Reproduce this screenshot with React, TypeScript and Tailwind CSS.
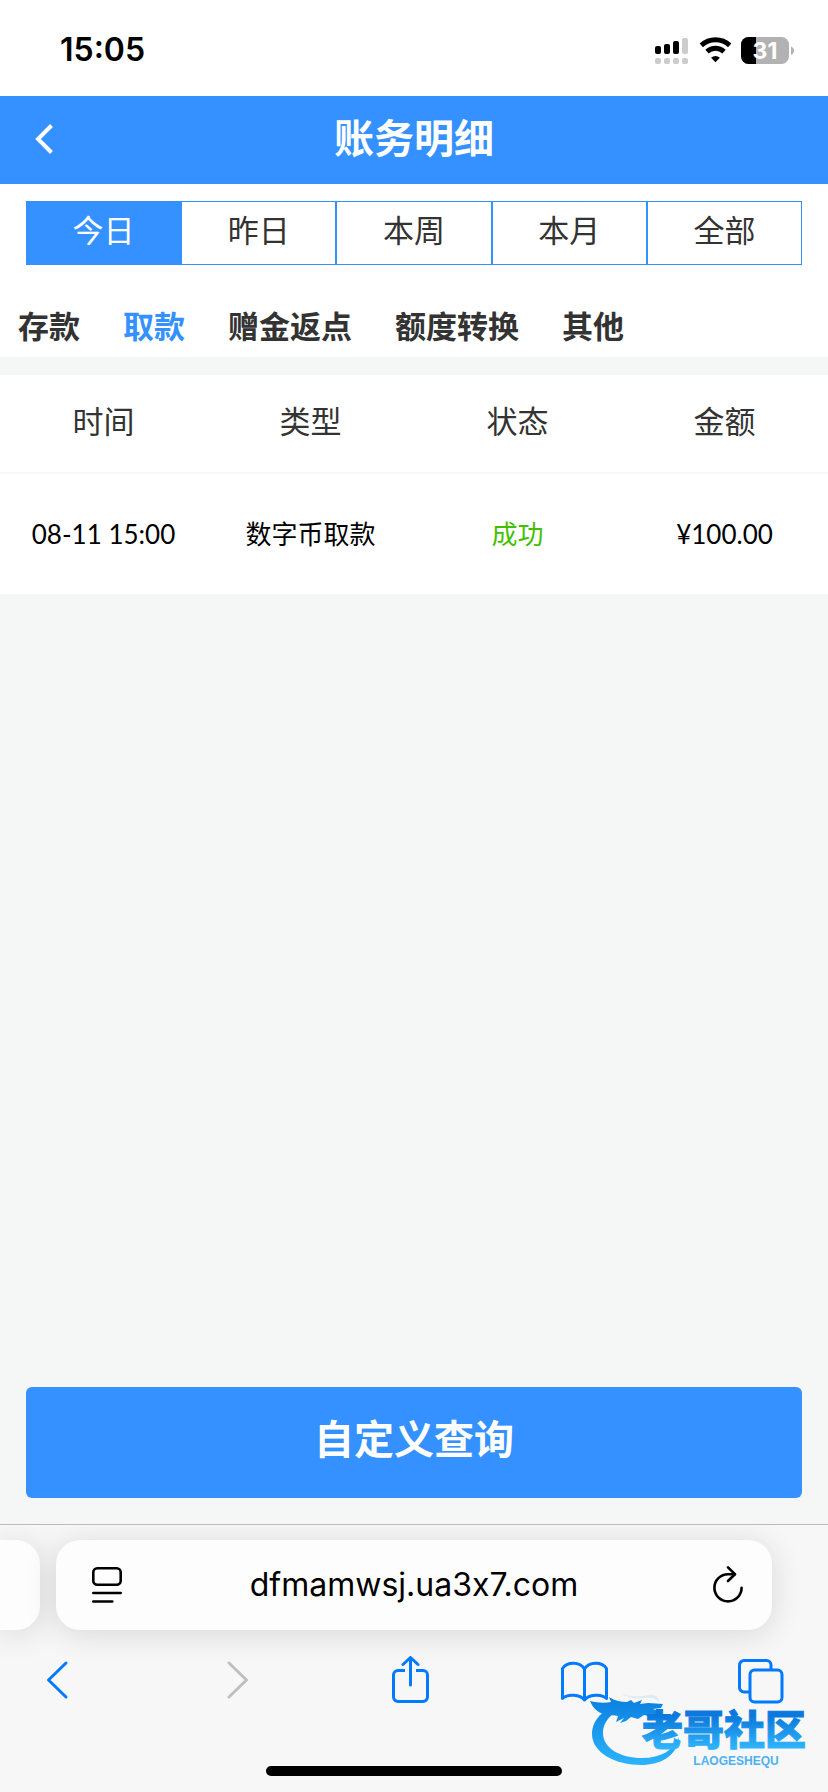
import React, { useState } from 'react'
import clsx from 'clsx'

const ranges = ['今日', '昨日', '本周', '本月', '全部']
const categories = ['存款', '取款', '赠金返点', '额度转换', '其他']
const columns = ['时间', '类型', '状态', '金额']
const records = [
    { time: '08-11 15:00', type: '数字币取款', status: '成功', amount: '¥100.00' },
]

function StatusBar() {
    return (
        <div className="flex h-24 items-center justify-between bg-white pr-8 pl-[60px] text-black">
            <span className="pt-1 font-['Inter'] text-[32px] leading-10 font-semibold">15:05</span>
            <svg width="142" height="32" viewBox="0 0 142 32" className="mt-1" aria-hidden="true">
                {/* Signal */}
                <g>
                    <rect x="1" y="12" width="6" height="8" rx="2" />
                    <rect x="10" y="10" width="6" height="10" rx="2" />
                    <rect x="19" y="7" width="6" height="13" rx="2" />
                </g>
                <g fill="#cccccc">
                    <rect x="28" y="4" width="6" height="16" rx="2" />
                    <rect x="1" y="24" width="6" height="6" rx="2" />
                    <rect x="10" y="24" width="6" height="6" rx="2" />
                    <rect x="19" y="24" width="6" height="6" rx="2" />
                    <rect x="28" y="24" width="6" height="6" rx="2" />
                </g>
                {/* Wifi */}
                <g fill="none" stroke="#000" strokeWidth="5">
                    <path d="M47.3 11.3a21.2 21.2 0 0 1 28.4 0" />
                    <path d="M53 17.6a12.8 12.8 0 0 1 17 0" />
                </g>
                <path d="M61.5 28.2l-4.4-4.5a6.4 6.4 0 0 1 8.8 0z" />
                {/* Battery */}
                <clipPath id="battery">
                    <rect x="87" y="3" width="48" height="27" rx="7.5" />
                </clipPath>
                <g clipPath="url(#battery)">
                    <rect x="87" y="3" width="48" height="27" fill="#b2b2b2" />
                    <rect x="87" y="3" width="15" height="27" />
                </g>
                <path d="M137 12.5c4 1.5 4 7 0 8.5z" fill="#b2b2b2" />
                <text x="111" y="25" textAnchor="middle" fill="#fff" className="font-['Inter'] text-[23px] font-bold">31</text>
            </svg>
        </div>
    )
}

function Header() {
    return (
        <header className="grid h-[88px] grid-cols-[88px_1fr_88px] items-center bg-[#3491ff] text-white">
            <button aria-label="返回" className="flex h-full items-center pl-8">
                <svg width="24" height="32" viewBox="0 0 24 32" fill="none" stroke="currentColor" strokeWidth="4" className="-mt-1">
                    <path d="M19.5 3.5L6 17l13.5 13.5" />
                </svg>
            </button>
            <h1 className="pb-2 text-center text-[40px] leading-[56px] font-bold">账务明细</h1>
        </header>
    )
}

function RangeTabs() {
    const [active, setActive] = useState('今日')
    return (
        <div className="grid grid-cols-5 px-[26px] pt-[17px]">
            {ranges.map((range) => (
                <button
                    key={range}
                    onClick={() => setActive(range)}
                    className={clsx(
                        'h-16 border border-[#3491ff] pb-2 text-[31px] leading-10',
                        active === range ? 'bg-[#3491ff] text-white' : 'text-[#333333]',
                    )}>
                    {range}
                </button>
            ))}
        </div>
    )
}

function CategoryTabs() {
    const [active, setActive] = useState('取款')
    return (
        <nav className="flex gap-[43px] pt-[37px] pr-4 pb-[10px] pl-[18px]">
            {categories.map((category) => (
                <button
                    key={category}
                    onClick={() => setActive(category)}
                    className={clsx(
                        'text-[31px] leading-[45px] font-bold whitespace-nowrap',
                        active === category ? 'text-[#3491ff]' : 'text-[#333333]',
                    )}>
                    {category}
                </button>
            ))}
        </nav>
    )
}

function RecordTable() {
    return (
        <table className="w-full table-fixed bg-white text-center">
            <thead>
                <tr className="h-[98px] border-b-2 border-[#f7f8f8] text-[31px] leading-10 text-[#333333]">
                    {columns.map((column) => (
                        <th key={column} className="pb-2 font-normal">{column}</th>
                    ))}
                </tr>
            </thead>
            <tbody className="font-['Lato','Noto_Sans_CJK_SC',sans-serif] text-[26px] leading-9 text-black">
                {records.map((record) => (
                    <tr key={record.time} className="h-[121px]">
                        <td>{record.time}</td>
                        <td>{record.type}</td>
                        <td className="text-[#43bf00]">{record.status}</td>
                        <td>{record.amount}</td>
                    </tr>
                ))}
            </tbody>
        </table>
    )
}

function AddressBar() {
    return (
        <div className="flex h-[90px] gap-4 pr-14">
            <div className="w-10 rounded-r-3xl bg-[#fdfdfd] shadow-[0_4px_32px_rgba(0,0,0,0.13)]" />
            <div className="flex flex-1 items-center justify-between rounded-3xl bg-[#fdfdfd] px-7 text-black shadow-[0_4px_32px_rgba(0,0,0,0.13)]">
                <button aria-label="页面菜单">
                    <svg width="46" height="40" viewBox="0 0 46 40" fill="none" stroke="currentColor" strokeWidth="2.6" strokeLinecap="round">
                        <rect x="9.3" y="3.3" width="27.4" height="16.4" rx="4" />
                        <path d="M9.3 28h27.4M9.3 36.5h19" />
                    </svg>
                </button>
                <button className="font-['Inter'] text-[32px] leading-10 [font-variant-ligatures:none]">dfmamwsj.ua3x7.com</button>
                <button aria-label="重新加载">
                    <svg width="46" height="40" viewBox="-7 0 46 40" fill="none" stroke="currentColor" strokeWidth="2.6" strokeLinecap="round" strokeLinejoin="round">
                        <path d="M30 9.2H23a13.6 13.6 0 1 0 13.6 13.6" />
                        <path d="M23 2.3l6.9 6.9L23 16" />
                    </svg>
                </button>
            </div>
        </div>
    )
}

function NavIcon({ label, disabled, children }: { label: string; disabled?: boolean; children: React.ReactNode }) {
    return (
        <button aria-label={label} disabled={disabled} className="text-[#007aff] disabled:text-[#bfbfbf]">
            <svg width="48" height="48" viewBox="0 0 48 48" fill="none" stroke="currentColor" strokeWidth="3" strokeLinecap="round" strokeLinejoin="round">
                {children}
            </svg>
        </button>
    )
}

function BrowserNav() {
    return (
        <div className="mt-[26px] flex justify-between pr-11 pl-[33px]">
            <NavIcon label="后退">
                <path d="M33 7L15.5 24 33 41" />
            </NavIcon>
            <NavIcon label="前进" disabled>
                <path d="M20 7l17.5 17L20 41" />
            </NavIcon>
            <NavIcon label="分享">
                <path d="M20 14.5h-7a4.5 4.5 0 0 0-4.5 4.5v22a4.5 4.5 0 0 0 4.5 4.5h25a4.5 4.5 0 0 0 4.5-4.5V19a4.5 4.5 0 0 0-4.5-4.5h-7" strokeLinecap="butt" />
                <path d="M25.5 29V2M18 8.5l7.5-7 7.5 7" />
            </NavIcon>
            <NavIcon label="书签">
                <path d="M24.5 13v31C20 38.5 8 37.5 2.5 42.5v-30C7 5.5 20 5.5 24.5 13zM24.5 44c4.5-5.5 16.5-6.5 22-1.5v-30C42 5.5 29 5.5 24.5 13" />
            </NavIcon>
            <NavIcon label="标签页">
                <path d="M12.5 36H8a4.5 4.5 0 0 1-4.5-4.5V9A4.5 4.5 0 0 1 8 4.5h22.5A4.5 4.5 0 0 1 35 9v4.5" />
                <rect x="14" y="14" width="32" height="32" rx="4.5" />
            </NavIcon>
        </div>
    )
}

function Watermark() {
    return (
        <svg width="236" height="84" viewBox="0 0 236 84" className="pointer-events-none absolute right-2 bottom-5">
            <defs>
                <linearGradient id="ring" x1="0" y1="10" x2="0" y2="76" gradientUnits="userSpaceOnUse">
                    <stop offset="0" stopColor="#0a7fe0" />
                    <stop offset="1" stopColor="#2bb3fb" />
                </linearGradient>
                <linearGradient id="name" x1="0" y1="28" x2="0" y2="60" gradientUnits="userSpaceOnUse">
                    <stop offset="0" stopColor="#0a78dc" />
                    <stop offset="1" stopColor="#2fb4fb" />
                </linearGradient>
            </defs>
            {/* Dragon */}
            <g fill="url(#ring)">
                <path d="M44 15C22 17 8 31 8 46c0 19 24 31 49 31 20 0 36-9 38-28-5 13-18 21-37 21-22 0-39-10-39-25 0-13 12-25 31-27z" />
                <path d="M6 13c8 2 15 2 21 1l-2-5c6 4 12 5 18 5l4-2 3 3 8-3-2 4 8-1 15 1-2 4-8 1 7 3-3 3-6-1 2 3-9-2-6 4-7-2-5 4-6 2 4-5-8 4 2-6c-4-1-8-1-11-1-7-1-14-6-17-14z" />
                <path d="M37 5c8 6 16 6 25 5 5-1 9 0 13 4 0-5-4-8-10-7-10 2-19 2-28-2z" opacity="0.1" />
            </g>
            <text x="140" y="57" textAnchor="middle" fill="url(#name)" stroke="url(#name)" strokeWidth="1" className="text-[41px] font-black">老哥社区</text>
            <text x="152" y="77" textAnchor="middle" fill="#4bb1f3" className="font-['Liberation_Sans'] text-[12px] font-bold">LAOGESHEQU</text>
        </svg>
    )
}

const App: React.FC = () => {
    return (
        <div className="flex min-h-screen flex-col bg-[#f4f7f6] font-['Noto_Sans_CJK_SC',sans-serif]">
            <StatusBar />
            <Header />
            <div className="mb-[18px] bg-white">
                <RangeTabs />
                <CategoryTabs />
            </div>
            <main className="flex flex-1 flex-col">
                <RecordTable />
                <div className="mt-auto px-[26px] pb-[26px]">
                    <button className="h-[111px] w-full rounded-md bg-[#3491ff] pb-3 text-[40px] leading-[56px] font-bold text-white">
                        自定义查询
                    </button>
                </div>
            </main>
            <footer className="relative overflow-hidden border-t border-[#bcbcbc] bg-[#f7f7f7] pt-[15px] pb-4">
                <AddressBar />
                <BrowserNav />
                <div className="mx-auto mt-[62px] h-[10px] w-[296px] rounded-full bg-black" />
                <Watermark />
            </footer>
        </div>
    )
}

export default App
